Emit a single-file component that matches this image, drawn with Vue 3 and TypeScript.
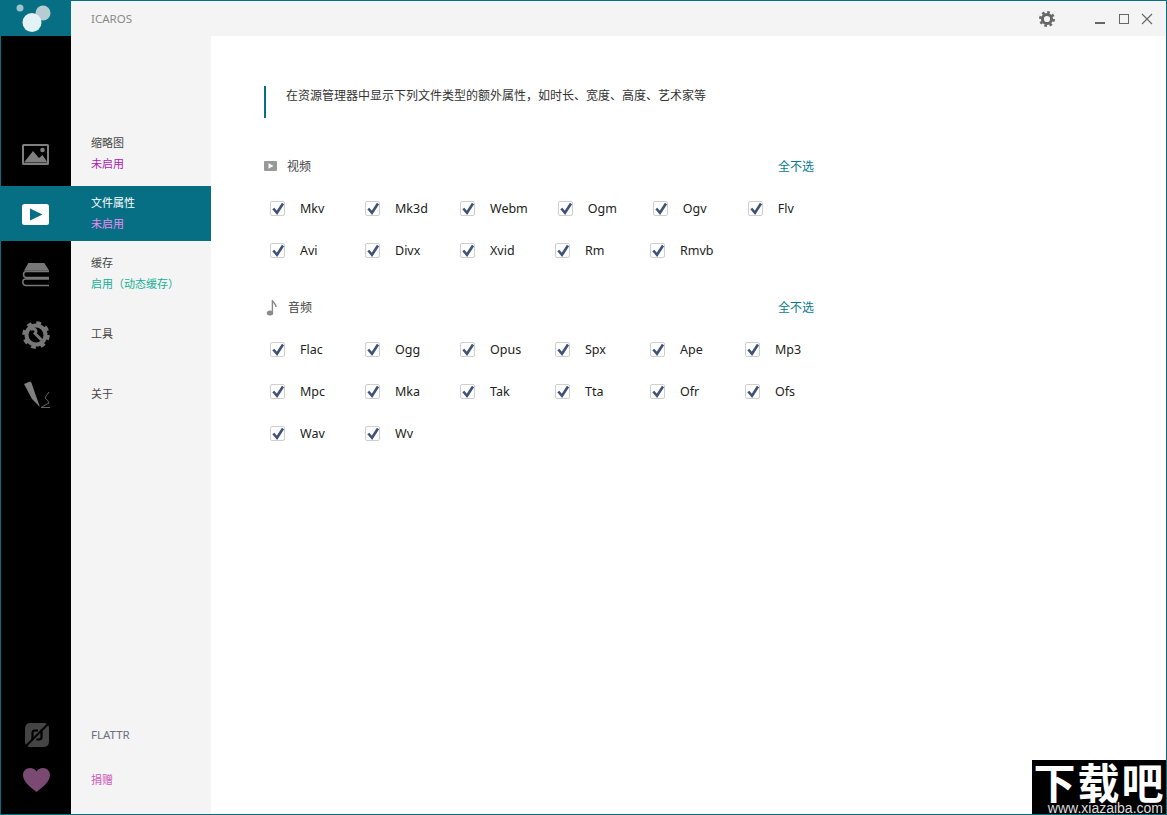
<script setup lang="ts">
import { ref } from 'vue';

interface NavItem {
  title: string;
  status?: string;
  kind?: string;
  active?: boolean;
}

interface Section {
  name: string;
  formats: string[];
}

const navItems: NavItem[] = [
  { title: '缩略图', status: '未启用', kind: 'off' },
  { title: '文件属性', status: '未启用', kind: 'off', active: true },
  { title: '缓存', status: '启用（动态缓存）', kind: 'on' },
  { title: '工具' },
  { title: '关于' },
];

const sections: Section[] = [
  { name: '视频', formats: ['Mkv', 'Mk3d', 'Webm', 'Ogm', 'Ogv', 'Flv', 'Avi', 'Divx', 'Xvid', 'Rm', 'Rmvb'] },
  { name: '音频', formats: ['Flac', 'Ogg', 'Opus', 'Spx', 'Ape', 'Mp3', 'Mpc', 'Mka', 'Tak', 'Tta', 'Ofr', 'Ofs', 'Wav', 'Wv'] },
];

const rows = (formats: string[]) => {
  const out: string[][] = [];
  for (let i = 0; i < formats.length; i += 6) out.push(formats.slice(i, i + 6));
  return out;
};

const unchecked = ref<string[]>([]);
function toggle(name: string) {
  const i = unchecked.value.indexOf(name);
  if (i === -1) unchecked.value.push(name);
  else unchecked.value.splice(i, 1);
}
function clearSection(section: Section) {
  section.formats.forEach(f => {
    if (!unchecked.value.includes(f)) unchecked.value.push(f);
  });
}
</script>

<template>
  <div class="window">
    <header class="titlebar">
      <div class="brand">
        <svg width="70" height="35" viewBox="0 0 70 35">
          <circle cx="19" cy="7" r="3.5" fill="#9cc4cd" />
          <circle cx="42" cy="12" r="7.5" fill="#b4ccd2" />
          <circle cx="31" cy="21.5" r="9.5" fill="#e3f3f5" />
        </svg>
      </div>
      <span class="app-name">ICAROS</span>
      <div class="controls">
        <svg class="gear" width="16" height="16" viewBox="0 0 16 16">
          <circle cx="8" cy="8" r="4.6" fill="none" stroke="#666" stroke-width="3" />
          <circle cx="8" cy="8" r="6.8" fill="none" stroke="#666" stroke-width="2.4" stroke-dasharray="2.67 2.67" />
        </svg>
        <svg width="12" height="12" viewBox="0 0 12 12"><path d="M0 10h10" stroke="#666" stroke-width="2" /></svg>
        <svg width="12" height="12" viewBox="0 0 12 12"><rect x="1.5" y="1.5" width="9" height="9" fill="none" stroke="#666" /></svg>
        <svg width="12" height="12" viewBox="0 0 12 12"><path d="M1 1l10 10M11 1L1 11" stroke="#666" stroke-width="1.1" /></svg>
      </div>
    </header>

    <div class="body">
      <aside class="sidebar">
        <nav class="nav">
          <div v-for="(item, i) in navItems" :key="item.title" class="nav-item" :class="{ active: item.active }">
            <div class="nav-icon">
              <svg v-if="i === 0" width="27" height="21" viewBox="0 0 27 21">
                <path fill="#7f7f7f" fill-rule="evenodd" d="M1.5 0h24A1.5 1.5 0 0 1 27 1.5v18a1.5 1.5 0 0 1-1.5 1.5h-24A1.5 1.5 0 0 1 0 19.5v-18A1.5 1.5 0 0 1 1.5 0zM2 2v17h23V2z" />
                <path fill="#7f7f7f" d="M2 18.5 11 7l6 7 3.500-3 5 7.500z" />
                <circle cx="20.500" cy="6" r="2.300" fill="#7f7f7f" />
              </svg>
              <svg v-else-if="i === 1" width="27" height="21" viewBox="0 0 27 21">
                <rect width="27" height="21" rx="2.500" fill="#fff" />
                <path d="M8 4.500 20.500 10.500 8 16.500z" fill="#066f83" />
              </svg>
              <svg v-else-if="i === 2" width="28" height="24" viewBox="0 0 28 24">
                <path d="M6.300 0h16l5 7.700H2z" fill="#777" />
                <path d="M27 8.500H4.500Q1.500 8.500 1.500 11.500T4.500 14.500H27M27 16H3.500Q.8 16 .8 19T3.500 22.500H27" fill="none" stroke="#777" stroke-width="1.500" />
              </svg>
              <svg v-else-if="i === 3" width="28" height="28" viewBox="0 0 28 28">
                <circle cx="14" cy="14" r="9.500" fill="none" stroke="#777" stroke-width="4" />
                <circle cx="14" cy="14" r="12" fill="none" stroke="#777" stroke-width="3.500" stroke-dasharray="4.700 4.720" />
                <path d="M8.500 8.500Q11 7 13 8.500T13 12.500L19.500 19" fill="none" stroke="#777" stroke-width="3" />
              </svg>
              <svg v-else width="28" height="28" viewBox="0 0 28 28">
                <path d="M2 3 8 .5Q9 .5 9.500 2L14 15l4 11-8-8z" fill="#808080" />
                <path d="M27 11Q24 15 23 17 26 19 27 22 23 24 19 26.500H28" fill="none" stroke="#666" stroke-width="1" />
              </svg>
            </div>
            <div class="nav-text">
              <div class="nav-title">{{ item.title }}</div>
              <div v-if="item.status" class="nav-status" :class="item.kind">{{ item.status }}</div>
            </div>
          </div>
        </nav>

        <div class="nav-bottom">
          <div class="bottom-item">
            <div class="nav-icon flat">
              <svg width="24" height="24" viewBox="0 0 24 24">
                <rect width="24" height="24" rx="5" fill="#444" />
                <path d="M24 0 0 24" stroke="#000" stroke-width="2" />
                <path d="M7.500 17V10Q7.500 7.500 10 7.500H13M16.500 6.500V14Q16.500 16.500 14 16.500H11.500" fill="none" stroke="#000" stroke-width="2.200" />
              </svg>
            </div>
            <span class="flattr">FLATTR</span>
          </div>
          <div class="bottom-item">
            <div class="nav-icon">
              <svg width="27" height="24" viewBox="0 0 27 24">
                <path d="M13.500 24C8 19.500 0 14 0 7 0 3 3 0 7 0c3 0 5.300 1.500 6.500 3.500C14.700 1.500 17 0 20 0c4 0 7 3 7 7 0 7-8 12.500-13.500 17z" fill="#7b4a73" />
              </svg>
            </div>
            <span class="donate">捐赠</span>
          </div>
        </div>
      </aside>

      <main class="content">
        <p class="intro">在资源管理器中显示下列文件类型的额外属性，如时长、宽度、高度、艺术家等</p>

        <section v-for="section in sections" :key="section.name" class="section">
          <div class="section-head">
            <div class="section-name">
              <svg v-if="section.name === '视频'" class="sec-icon" width="13" height="10" viewBox="0 0 13 10">
                <rect width="13" height="10" rx="1" fill="#999" />
                <path d="M4.500 2.200 9.500 5 4.500 7.800z" fill="#fff" />
              </svg>
              <svg v-else class="sec-icon" width="14" height="17" viewBox="0 0 14 17">
                <ellipse cx="6" cy="14" rx="3.200" ry="2.500" fill="#8a8a8a" />
                <path d="M8.400 14V1c.3 2.500 3.600 3.500 3.600 7" fill="none" stroke="#8a8a8a" stroke-width="1.400" />
              </svg>
              <span>{{ section.name }}</span>
            </div>
            <a class="select-none" @click="clearSection(section)">全不选</a>
          </div>
          <div class="format-rows">
            <div v-for="(row, r) in rows(section.formats)" :key="r" class="format-row">
              <label v-for="f in row" :key="f" class="format" @click.prevent="toggle(f)">
                <span class="box">
                  <svg v-show="!unchecked.includes(f)" width="13" height="13" viewBox="0 0 13 13">
                    <path d="M2.300 6.500 6 10.800 12 1.500" fill="none" stroke="#3f5378" stroke-width="2.600" />
                  </svg>
                </span>
                <span class="format-name">{{ f }}</span>
              </label>
            </div>
          </div>
        </section>
      </main>
    </div>

    <div class="watermark">
      <div class="wm-name">下载吧</div>
      <div class="wm-url">www.xiazaiba.com</div>
    </div>
  </div>
</template>

<style>
html,
body {
  margin: 0;
  background: #fff;
}
</style>

<style scoped>
.window {
  position: relative;
  box-sizing: border-box;
  width: 100%;
  height: 100vh;
  min-height: 815px;
  display: flex;
  flex-direction: column;
  border: 1px solid #066f83;
  font-family: "Noto Sans", "Noto Sans CJK SC", sans-serif;
  overflow: hidden;
}

.titlebar {
  height: 35px;
  flex: none;
  display: flex;
  align-items: center;
  background: #f4f4f4;
}

.brand {
  width: 70px;
  height: 35px;
  background: #066f83;
}

.brand svg {
  display: block;
}

.app-name {
  margin-left: 20px;
  font-size: 11.5px;
  color: #8a8a8a;
}

.controls {
  margin-left: auto;
  display: flex;
  align-items: center;
  padding: 1px 13px 0 0;
  gap: 11px;
}

.controls .gear {
  margin-right: 29px;
}

.body {
  flex: 1;
  display: flex;
  min-height: 0;
}

.sidebar {
  width: 210px;
  flex: none;
  display: flex;
  flex-direction: column;
  justify-content: space-between;
  background: linear-gradient(to right, #000 70px, #f4f4f4 70px);
}

.nav {
  padding-top: 90px;
  display: flex;
  flex-direction: column;
  gap: 5px;
}

.nav-item {
  height: 55px;
  display: flex;
  align-items: center;
}

.nav-item.active {
  background: #066f83;
}

.nav-icon {
  width: 70px;
  box-sizing: border-box;
  padding: 2px 1px 0 0;
  flex: none;
  display: flex;
  justify-content: center;
  align-items: center;
}

.bottom-item .nav-icon {
  padding-left: 1px;
  padding-right: 0;
}

.bottom-item .nav-icon.flat {
  padding-top: 0;
}

.nav-icon svg {
  display: block;
}

.nav-text {
  padding-left: 20px;
}

.nav-title {
  font-size: 11px;
  line-height: 16px;
  color: #444;
}

.nav-status {
  margin-top: 5px;
  font-size: 11px;
  line-height: 16px;
}

.nav-status.off {
  color: #b020b8;
}

.nav-status.on {
  color: #14b096;
}

.active .nav-title {
  color: #fff;
}

.active .nav-status.off {
  color: #ec8cf2;
}

.nav-bottom {
  padding-bottom: 13px;
}

.bottom-item {
  height: 44px;
  display: flex;
  align-items: center;
}

.flattr {
  margin-left: 20px;
  padding-bottom: 2px;
  font-size: 11.5px;
  color: #6e6e80;
}

.donate {
  margin-left: 20px;
  font-size: 11px;
  color: #cc5ab8;
}

.content {
  flex: 1;
  background: #fff;
  padding: 50px 0 0 53px;
  min-width: 0;
}

.intro {
  margin: 0;
  width: 550px;
  box-sizing: border-box;
  height: 32px;
  border-left: 2px solid #066f83;
  padding: 1px 0 0 20px;
  font-size: 12px;
  line-height: 18px;
  color: #333;
  white-space: nowrap;
}

.section {
  width: 550px;
  margin-top: 36px;
}

.section:first-of-type {
  margin-top: 38px;
}

.section-head {
  height: 20px;
  display: flex;
  justify-content: space-between;
  align-items: center;
  font-size: 12px;
  color: #444;
}

.section-name {
  display: flex;
  align-items: center;
}

.sec-icon {
  margin-right: 10px;
}

.select-none {
  color: #0a7a90;
  cursor: pointer;
}

.format-rows {
  margin-top: 23px;
  padding-left: 6px;
  display: flex;
  flex-direction: column;
  gap: 22px;
}

.format-row {
  display: flex;
  height: 20px;
}

.format {
  flex: none;
  min-width: 95px;
  box-sizing: border-box;
  padding-right: 30px;
  display: flex;
  align-items: flex-start;
  gap: 15px;
  cursor: pointer;
}

.box {
  box-sizing: border-box;
  width: 15px;
  height: 15px;
  margin-top: 2px;
  flex: none;
  border: 1px solid #cfcfcf;
  border-radius: 2px;
  background: #fff;
}

.box svg {
  display: block;
  overflow: visible;
}

.format-name {
  font-size: 12.5px;
  line-height: 20px;
  color: #222;
}

.watermark {
  position: absolute;
  right: -1px;
  bottom: -1px;
  width: 135px;
  height: 55px;
  background: #000;
  color: #fff;
}

.wm-name {
  font-family: "Noto Sans CJK SC", sans-serif;
  font-weight: 700;
  font-size: 42px;
  line-height: 42px;
  letter-spacing: 2px;
  text-align: center;
}

.wm-url {
  font-family: "Liberation Sans", sans-serif;
  font-size: 14px;
  line-height: 13px;
  padding-right: 4px;
  text-align: right;
  color: #ddd;
}
</style>
